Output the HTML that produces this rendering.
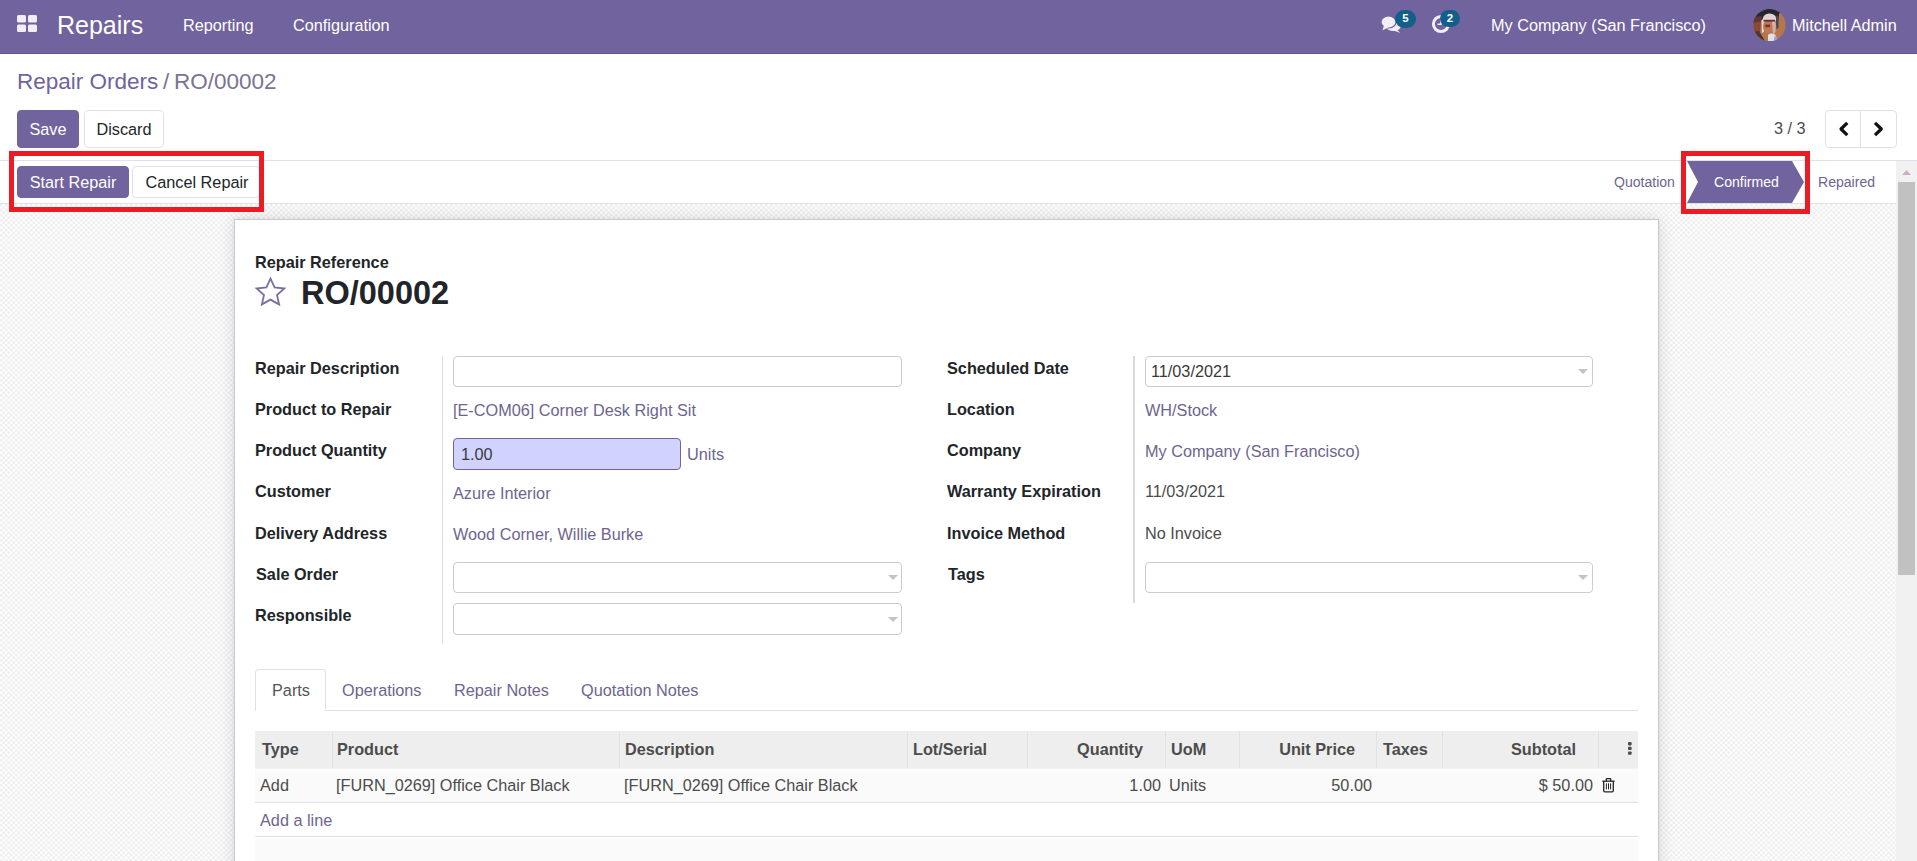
<!DOCTYPE html>
<html>
<head>
<meta charset="utf-8">
<title>Repairs</title>
<style>
*{box-sizing:border-box;margin:0;padding:0}
html,body{width:1917px;height:861px;overflow:hidden;background:#fff}
body{font-family:"Liberation Sans",sans-serif;font-size:16.25px;color:#4c4c4c;position:relative}
.a{position:absolute;white-space:nowrap;line-height:1}
.b{font-weight:bold;color:#212529}
.lnk{color:#6d658f}
/* navbar */
#nav{left:0;top:0;width:1917px;height:54px;background:#71639e;border-bottom:1px solid #5f5489}
#nav .a{color:#fff}
/* control panel */
.btn{border-radius:4px;border:1px solid #dee2e6;background:#fff;color:#212529;text-align:center}
.btn.p{background:#71639e;border-color:#71639e;color:#fff}
/* content background */
#bg{left:0;top:204px;width:1896px;height:657px;background:#f4f4f4}
#sheet{left:234px;top:219px;width:1425px;height:660px;background:#fff;border:1px solid #c9c9d6;box-shadow:0 0 16px rgba(0,0,0,.13),0 0 3px rgba(0,0,0,.06)}
.inp{border:1px solid #ccc;border-radius:4px;background:#fff;height:31px}
.caret{width:0;height:0;border-left:5px solid transparent;border-right:5px solid transparent;border-top:5px solid #c4c4c4}
.vl{width:1px;background:#ddd}
.hl{height:1px;background:#dee2e6}
.red{border:5px solid #ed1c24}
</style>
</head>
<body>
<!-- background + sheet -->
<svg id="bg" class="a" width="1896" height="657" viewBox="0 0 1896 657"><defs><pattern id="chk" width="5" height="5" patternUnits="userSpaceOnUse"><rect width="5" height="5" fill="#fdfdfd"/><rect x="0" y="0" width="2.5" height="2.5" fill="#efefef"/><rect x="2.5" y="2.5" width="2.5" height="2.5" fill="#efefef"/></pattern></defs><rect width="1896" height="657" fill="url(#chk)"/></svg>
<div id="sheet" class="a"></div>

<!-- navbar -->
<div id="nav" class="a">
  <svg class="a" style="left:17px;top:15px" width="20" height="17" viewBox="0 0 20 17"><g fill="#f1eff5"><rect x="0" y="0" width="9" height="7.5" rx="1.5"/><rect x="11" y="0" width="9" height="7.5" rx="1.5"/><rect x="0" y="9.5" width="9" height="7.5" rx="1.5"/><rect x="11" y="9.5" width="9" height="7.5" rx="1.5"/></g></svg>
  <div class="a" style="left:57px;top:13px;font-size:25px">Repairs</div>
  <div class="a" style="left:183px;top:17px">Reporting</div>
  <div class="a" style="left:293px;top:17px">Configuration</div>
  <svg class="a" style="left:1381px;top:15px" width="21" height="19" viewBox="0 0 21 19"><g fill="#f1eff5"><ellipse cx="12.5" cy="10.5" rx="7.5" ry="5.6"/><path d="M15 14 L19.5 18 L12.5 15.5 Z"/><ellipse cx="7.5" cy="7" rx="7.5" ry="6" stroke="#71639e" stroke-width="1.2"/><path d="M3 10.5 L1.5 15.2 L7.5 12.5 Z"/></g></svg>
  <div class="a" style="left:1395px;top:10px;width:21px;height:18px;border-radius:9px;background:#125f8a"></div>
  <div class="a" style="left:1395px;top:13px;width:21px;text-align:center;font-size:11.5px;font-weight:bold">5</div>
  <svg class="a" style="left:1431px;top:14px" width="20" height="20" viewBox="0 0 20 20"><circle cx="10" cy="10" r="7.6" fill="none" stroke="#f1eff5" stroke-width="3"/><path d="M10 5.5 V10.3 H6.5" fill="none" stroke="#f1eff5" stroke-width="1.6"/></svg>
  <div class="a" style="left:1440px;top:10px;width:20px;height:17px;border-radius:8.5px;background:#125f8a"></div>
  <div class="a" style="left:1440px;top:12.5px;width:20px;text-align:center;font-size:11.5px;font-weight:bold">2</div>
  <svg class="a" style="left:1753px;top:8px" width="34" height="34" viewBox="0 0 34 34"><defs><clipPath id="av"><circle cx="16.5" cy="17" r="16.1"/></clipPath></defs><g clip-path="url(#av)"><rect width="34" height="34" fill="#b4764b"/><path d="M0 0 H30 L26 6 L25 14 L23 9 C19 4 12 5 10 10 L8 13 L0 15 Z" fill="#232733"/><path d="M0 9 L9 8 L8 14 L7 24 L0 24 Z" fill="#7a3a34" opacity=".75"/><path d="M22.5 7 L25.5 9 L25.5 20 L23.5 21 Z" fill="#4a4450"/><ellipse cx="16.5" cy="11" rx="6.6" ry="5.5" fill="#e6d2d2"/><path d="M8.6 12 L10.8 11 L10.8 24 L9 25 Z" fill="#e4dde2"/><ellipse cx="15.5" cy="18.5" rx="5.6" ry="6.5" fill="#bb7c55"/><rect x="10.5" y="11.8" width="11.5" height="1.8" fill="#5a2f33"/><rect x="12.3" y="16.6" width="4.6" height="2.6" fill="#8a2a2a"/><path d="M19 14 L23 15 L22.5 24 L20 27 Z" fill="#dbb7b7" opacity=".85"/><path d="M15 27 C17 25 21 25 23 28 L24 31 L21 34 H15 Z" fill="#e2dfe6"/><path d="M21.5 28 L25 29.5 L24 32 L21 32 Z" fill="#7f8fd0" opacity=".8"/><path d="M0 24 L6 23 L12 33 L4 34 Z" fill="#3a2a30" opacity=".85"/></g></svg>
  <div class="a" style="left:1491px;top:17px">My Company (San Francisco)</div>
  <div class="a" style="left:1792px;top:17px">Mitchell Admin</div>
</div>

<!-- breadcrumb -->
<div class="a" style="left:17px;top:71px;font-size:22.5px;color:#71639e">Repair Orders</div>
<div class="a" style="left:163px;top:71px;font-size:22.5px;color:#7b7391">/</div>
<div class="a" style="left:174px;top:71px;font-size:22.5px;color:#7b7391">RO/00002</div>

<!-- control buttons -->
<div class="a btn p" style="left:17px;top:110px;width:62px;height:38px;line-height:36px">Save</div>
<div class="a btn" style="left:84px;top:110px;width:80px;height:38px;line-height:36px">Discard</div>
<div class="a" style="left:1774px;top:120px;color:#4c4c4c">3 / 3</div>
<div class="a btn" style="left:1825px;top:110px;width:72px;height:38px"></div>
<div class="a vl" style="left:1860px;top:111px;height:36px;background:#dee2e6"></div>
<svg class="a" style="left:1837px;top:121px" width="14" height="16" viewBox="0 0 14 16"><path d="M10.3 1.8 L4 8 L10.3 14.2" fill="none" stroke="#111" stroke-width="3.2" stroke-linejoin="round"/></svg>
<svg class="a" style="left:1871px;top:121px" width="14" height="16" viewBox="0 0 14 16"><path d="M4 1.8 L10.3 8 L4 14.2" fill="none" stroke="#111" stroke-width="3.2" stroke-linejoin="round"/></svg>

<!-- statusbar -->
<div class="a hl" style="left:0;top:160px;width:1917px"></div>
<div class="a hl" style="left:0;top:203px;width:1896px"></div>
<div class="a btn p" style="left:17px;top:166px;width:112px;height:32px;line-height:30px">Start Repair</div>
<div class="a btn" style="left:132px;top:166px;width:128px;height:32px;line-height:30px;padding-left:2px">Cancel Repair</div>
<div class="a" style="left:1614px;top:175px;font-size:14.06px;color:#6d658f">Quotation</div>
<svg class="a" style="left:1687px;top:161px" width="118" height="42" viewBox="0 0 118 42"><path d="M0 0 H105 L117 21 L105 42 H0 L11 21 Z" fill="#71639e"/></svg>
<div class="a" style="left:1714px;top:175px;font-size:14.06px;color:#fff">Confirmed</div>
<div class="a" style="left:1818px;top:175px;font-size:14.06px;color:#6d658f">Repaired</div>

<!-- red boxes -->
<div class="a red" style="left:9px;top:151px;width:255px;height:61px"></div>
<div class="a red" style="left:1681px;top:151px;width:129px;height:63px"></div>

<!-- scrollbar -->
<div class="a" style="left:1896px;top:161px;width:21px;height:700px;background:#f1f1f1"></div>
<div class="a" style="left:1898px;top:182px;width:17px;height:393px;background:#c1c1c1"></div>
<svg class="a" style="left:1902px;top:170px" width="9" height="5" viewBox="0 0 9 5"><path d="M4.5 0 L9 5 H0 Z" fill="#cfaec3"/></svg>

<!-- sheet title -->
<div class="a b" style="left:255px;top:254px">Repair Reference</div>
<svg class="a" style="left:254px;top:276px" width="33" height="31" viewBox="0 0 33 31"><path d="M16.5 2.6 L20.6 11.4 L30.3 12.5 L23 19 L25.1 28.4 L16.5 23.6 L7.9 28.4 L10 19 L2.7 12.5 L12.4 11.4 Z" fill="none" stroke="#7c6fa0" stroke-width="1.8" stroke-linejoin="miter"/></svg>
<div class="a b" style="left:301px;top:277px;font-size:32.5px">RO/00002</div>

<!-- left group -->
<div class="a vl" style="left:442px;top:356px;height:288px"></div>
<div class="a b" style="left:255px;top:360px">Repair Description</div>
<div class="a b" style="left:255px;top:401px">Product to Repair</div>
<div class="a b" style="left:255px;top:442px">Product Quantity</div>
<div class="a b" style="left:255px;top:483px">Customer</div>
<div class="a b" style="left:255px;top:525px">Delivery Address</div>
<div class="a b" style="left:256px;top:566px">Sale Order</div>
<div class="a b" style="left:255px;top:607px">Responsible</div>
<div class="a inp" style="left:453px;top:356px;width:449px"></div>
<div class="a lnk" style="left:453px;top:402px">[E-COM06] Corner Desk Right Sit</div>
<div class="a inp" style="left:453px;top:438px;width:228px;height:32px;background:#d2d2ff;border-color:#71639e"></div>
<div class="a" style="left:461px;top:446px;color:#3a3a3a">1.00</div>
<div class="a" style="left:687px;top:446px;color:#6d658f">Units</div>
<div class="a lnk" style="left:453px;top:485px">Azure Interior</div>
<div class="a lnk" style="left:453px;top:526px">Wood Corner, Willie Burke</div>
<div class="a inp" style="left:453px;top:562px;width:449px"></div>
<div class="a caret" style="left:888px;top:575px"></div>
<div class="a inp" style="left:453px;top:603px;width:449px;height:32px"></div>
<div class="a caret" style="left:888px;top:617px"></div>

<!-- right group -->
<div class="a vl" style="left:1133px;top:356px;height:247px;width:2px;background:#dadada"></div>
<div class="a b" style="left:947px;top:360px">Scheduled Date</div>
<div class="a b" style="left:947px;top:401px">Location</div>
<div class="a b" style="left:947px;top:442px">Company</div>
<div class="a b" style="left:947px;top:483px">Warranty Expiration</div>
<div class="a b" style="left:947px;top:525px">Invoice Method</div>
<div class="a b" style="left:948px;top:566px">Tags</div>
<div class="a inp" style="left:1145px;top:356px;width:448px"></div>
<div class="a" style="left:1151px;top:363px;color:#3a3a3a"><span style="letter-spacing:-1.3px">1</span>1/03/2021</div>
<div class="a caret" style="left:1578px;top:369px"></div>
<div class="a lnk" style="left:1145px;top:402px">WH/Stock</div>
<div class="a lnk" style="left:1145px;top:443px">My Company (San Francisco)</div>
<div class="a" style="left:1145px;top:483px"><span style="letter-spacing:-1.3px">1</span>1/03/2021</div>
<div class="a" style="left:1145px;top:525px">No Invoice</div>
<div class="a inp" style="left:1145px;top:562px;width:448px"></div>
<div class="a caret" style="left:1578px;top:575px"></div>

<!-- tabs -->
<div class="a hl" style="left:255px;top:710px;width:1383px"></div>
<div class="a" style="left:255px;top:669px;width:71px;height:42px;border:1px solid #dee2e6;border-bottom-color:#fff;border-radius:4px 4px 0 0;background:#fff"></div>
<div class="a" style="left:272px;top:682px;color:#555">Parts</div>
<div class="a lnk" style="left:342px;top:682px">Operations</div>
<div class="a lnk" style="left:454px;top:682px">Repair Notes</div>
<div class="a lnk" style="left:581px;top:682px">Quotation Notes</div>

<!-- table -->
<div class="a" style="left:255px;top:731px;width:1383px;height:38px;background:#eeeeee;border-bottom:1px solid #f3f3f3"></div>
<div class="a" style="left:255px;top:769px;width:1383px;height:33px;background:#fafafa"></div>
<div class="a hl" style="left:255px;top:802px;width:1383px"></div>
<div class="a hl" style="left:255px;top:836px;width:1383px"></div>
<div class="a" style="left:255px;top:839px;width:1383px;height:22px;background:#fafafa"></div>
<div class="a" style="left:332px;top:731px;width:1px;height:37px;background:#e0e2e6"></div>
<div class="a" style="left:619px;top:731px;width:1px;height:37px;background:#e0e2e6"></div>
<div class="a" style="left:907px;top:731px;width:1px;height:37px;background:#e0e2e6"></div>
<div class="a" style="left:1027px;top:731px;width:1px;height:37px;background:#e0e2e6"></div>
<div class="a" style="left:1165px;top:731px;width:1px;height:37px;background:#e0e2e6"></div>
<div class="a" style="left:1239px;top:731px;width:1px;height:37px;background:#e0e2e6"></div>
<div class="a" style="left:1376px;top:731px;width:1px;height:37px;background:#e0e2e6"></div>
<div class="a" style="left:1442px;top:731px;width:1px;height:37px;background:#e0e2e6"></div>
<div class="a" style="left:1598px;top:731px;width:1px;height:37px;background:#e0e2e6"></div>
<svg class="a" style="left:1627px;top:742px" width="6" height="14" viewBox="0 0 6 14"><g fill="#4c4c4c"><rect x="1" y="0" width="3.6" height="3.4" rx=".8"/><rect x="1" y="4.7" width="3.6" height="3.4" rx=".8"/><rect x="1" y="9.4" width="3.6" height="3.4" rx=".8"/></g></svg>
<svg class="a" style="left:1602px;top:778px" width="13" height="15" viewBox="0 0 13 15"><g fill="none" stroke="#222" stroke-width="1.3"><path d="M0.3 3.2 H12.7"/><path d="M4.3 3 V1.2 Q4.3 .7 4.9 .7 H8.1 Q8.7 .7 8.7 1.2 V3"/><path d="M1.7 3.4 V12.6 Q1.7 13.8 2.9 13.8 H10.1 Q11.3 13.8 11.3 12.6 V3.4"/></g><g stroke="#222" stroke-width="1"><path d="M4.4 5.4 V11.4 M6.5 5.4 V11.4 M8.6 5.4 V11.4"/></g></svg>
<div class="a b" style="left:262px;top:741px;color:#4c4c4c">Type</div>
<div class="a b" style="left:337px;top:741px;color:#4c4c4c">Product</div>
<div class="a b" style="left:625px;top:741px;color:#4c4c4c">Description</div>
<div class="a b" style="left:913px;top:741px;color:#4c4c4c">Lot/Serial</div>
<div class="a b" style="right:774px;top:741px;color:#4c4c4c">Quantity</div>
<div class="a b" style="left:1171px;top:741px;color:#4c4c4c">UoM</div>
<div class="a b" style="right:562px;top:741px;color:#4c4c4c">Unit Price</div>
<div class="a b" style="left:1383px;top:741px;color:#4c4c4c">Taxes</div>
<div class="a b" style="right:341px;top:741px;color:#4c4c4c">Subtotal</div>
<div class="a" style="left:260px;top:777px">Add</div>
<div class="a" style="left:336px;top:777px">[FURN_0269] Office Chair Black</div>
<div class="a" style="left:624px;top:777px">[FURN_0269] Office Chair Black</div>
<div class="a" style="right:756px;top:777px">1.00</div>
<div class="a" style="left:1169px;top:777px">Units</div>
<div class="a" style="right:545px;top:777px">50.00</div>
<div class="a" style="right:324px;top:777px">$ 50.00</div>
<div class="a lnk" style="left:260px;top:812px">Add a line</div>
</body>
</html>
